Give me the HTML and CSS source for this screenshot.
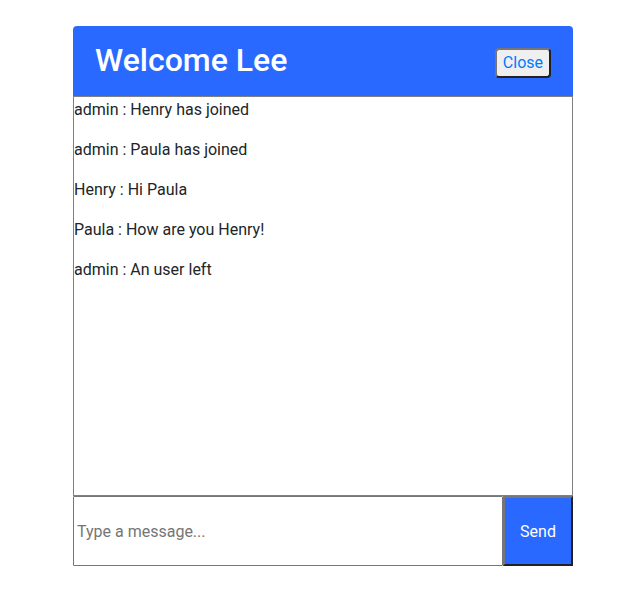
FILE: index.html
```html
<!DOCTYPE html>
<html lang="en">
<head>
<meta charset="utf-8">
<meta name="viewport" content="width=device-width, initial-scale=1">
<title>Chat</title>
<link rel="stylesheet" href="styles.css">
</head>
<body>
<main class="chat">
  <header class="chat-header">
    <h2 class="title">Welcome Lee</h2>
    <button class="close" type="button">Close</button>
  </header>
  <section class="messages" aria-label="Messages">
    <p>admin : Henry has joined</p>
    <p>admin : Paula has joined</p>
    <p>Henry : Hi Paula</p>
    <p>Paula : How are you Henry!</p>
    <p>admin : An user left</p>
  </section>
  <form class="composer">
    <input class="field" type="text" placeholder="Type a message..." aria-label="Message">
    <button class="send" type="button">Send</button>
  </form>
</main>
</body>
</html>
```

FILE: styles.css
```css
* {
  box-sizing: border-box;
}

body {
  margin: 0;
  padding: 26px 16px 43px 30px;
  background: #fff;
  color: #212529;
  font: 16px/26px Roboto, sans-serif;
}

.chat {
  max-width: 500px;
  margin: 0 auto;
}

.chat-header {
  display: flex;
  align-items: flex-end;
  justify-content: space-between;
  padding: 16px 22px 18px;
  border-radius: 4px 4px 0 0;
  background: #2969ff;
  color: #fff;
}

.title {
  margin: 0;
  font-size: 32px;
  line-height: 36px;
  font-weight: 500;
}

.close {
  padding: 0 6px;
  border: 2px outset #767676;
  border-radius: 4px;
  background: #efefef;
  color: #007bff;
  font: inherit;
}

.messages {
  height: 400px;
  overflow: auto;
  border: 1px solid #808080;
}

.messages p {
  margin: 0 0 14px;
}

.composer {
  display: flex;
  height: 70px;
}

.field {
  flex: 1;
  min-width: 0;
  padding: 2px 3px 0;
  border: 1px solid #767676;
  border-radius: 1px;
  background: #fff;
  font: inherit;
}

.field::placeholder {
  color: #757575;
}

.send {
  width: 70px;
  padding: 2px 6px 0;
  border: 2px outset #767676;
  background: #2969ff;
  color: #fff;
  font: inherit;
}
```
